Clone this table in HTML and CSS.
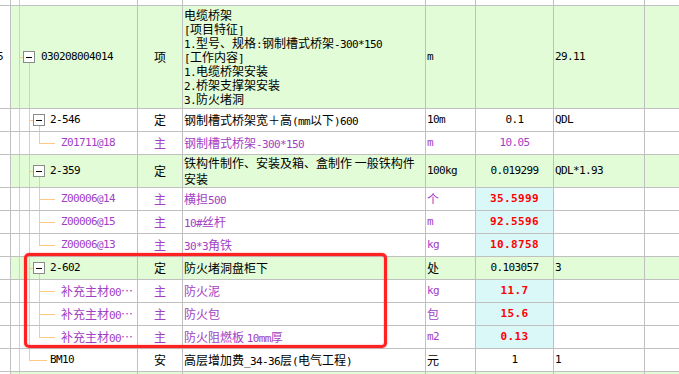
FILE: index.html
```html
<!DOCTYPE html>
<html lang="zh-CN">
<head>
<meta charset="utf-8">
<title>清单</title>
<link rel="stylesheet" href="styles.css">
</head>
<body>
<div class="sheet">
  <div class="grid">
    <div class="row">
      <div class="c n"></div><div class="c code t0"></div><div class="c"></div><div class="c"></div><div class="c"></div><div class="c"></div><div class="c"></div><div class="c"></div>
    </div>
    <div class="row g">
      <div class="c n a">5</div>
      <div class="c code a t-l1 l1"><span class="bx bx1"></span>030208004014</div>
      <div class="c ctr">项</div>
      <div class="c nm"><div class="ml">电缆桥架<br><span class="a">[</span>项目特征<span class="a">]</span><br><span class="a">1.</span>型号、规格<span class="a">:</span>钢制槽式桥架<span class="a">-300*150</span><br><span class="a">[</span>工作内容<span class="a">]</span><br><span class="a">1.</span>电缆桥架安装<br><span class="a">2.</span>桥架支撑架安装<br><span class="a">3.</span>防火堵洞</div></div>
      <div class="c un a">m</div>
      <div class="c ctr a"></div>
      <div class="c ex a">29.11</div>
      <div class="c"></div>
    </div>
    <div class="row">
      <div class="c n"></div>
      <div class="c code a t-l2 l2"><span class="bx"></span>2-546</div>
      <div class="c ctr">定</div>
      <div class="c nm"><span>钢制槽式桥架宽＋高<span class="a">(mm</span>以下<span class="a">)600</span></span></div>
      <div class="c un a">10m</div>
      <div class="c ctr a">0.1</div>
      <div class="c ex a">QDL</div>
      <div class="c"></div>
    </div>
    <div class="row m">
      <div class="c n"></div>
      <div class="c code a t-cl lc">Z01711@18</div>
      <div class="c ctr">主</div>
      <div class="c nm"><span>钢制槽式桥架<span class="a">-300*150</span></span></div>
      <div class="c un a">m</div>
      <div class="c ctr a">10.05</div>
      <div class="c ex a"></div>
      <div class="c"></div>
    </div>
    <div class="row g">
      <div class="c n"></div>
      <div class="c code a t-l2 l2"><span class="bx"></span>2-359</div>
      <div class="c ctr">定</div>
      <div class="c nm"><div class="ml two">铁构件制作、安装及箱、盒制作 一般铁构件<br>安装</div></div>
      <div class="c un a">100kg</div>
      <div class="c ctr a">0.019299</div>
      <div class="c ex a">QDL*1.93</div>
      <div class="c"></div>
    </div>
    <div class="row m">
      <div class="c n"></div>
      <div class="c code a t-c lc">Z00006@14</div>
      <div class="c ctr">主</div>
      <div class="c nm"><span>横担<span class="a">500</span></span></div>
      <div class="c un">个</div>
      <div class="c ctr a cy r">35.5999</div>
      <div class="c ex a"></div>
      <div class="c"></div>
    </div>
    <div class="row m">
      <div class="c n"></div>
      <div class="c code a t-c lc">Z00006@15</div>
      <div class="c ctr">主</div>
      <div class="c nm"><span><span class="a">10#</span>丝杆</span></div>
      <div class="c un a">m</div>
      <div class="c ctr a cy r">92.5596</div>
      <div class="c ex a"></div>
      <div class="c"></div>
    </div>
    <div class="row m">
      <div class="c n"></div>
      <div class="c code a t-cl lc">Z00006@13</div>
      <div class="c ctr">主</div>
      <div class="c nm"><span><span class="a">30*3</span>角铁</span></div>
      <div class="c un a">kg</div>
      <div class="c ctr a cy r">10.8758</div>
      <div class="c ex a"></div>
      <div class="c"></div>
    </div>
    <div class="row g">
      <div class="c n"></div>
      <div class="c code a t-l2 l2"><span class="bx"></span>2-602</div>
      <div class="c ctr">定</div>
      <div class="c nm">防火堵洞盘柜下</div>
      <div class="c un">处</div>
      <div class="c ctr a">0.103057</div>
      <div class="c ex a">3</div>
      <div class="c"></div>
    </div>
    <div class="row m">
      <div class="c n"></div>
      <div class="c code t-c lc"><span>补充主材<span class="a">00</span>⋯</span></div>
      <div class="c ctr">主</div>
      <div class="c nm">防火泥</div>
      <div class="c un a">kg</div>
      <div class="c ctr a cy r">11.7</div>
      <div class="c ex a"></div>
      <div class="c"></div>
    </div>
    <div class="row m">
      <div class="c n"></div>
      <div class="c code t-c lc"><span>补充主材<span class="a">00</span>⋯</span></div>
      <div class="c ctr">主</div>
      <div class="c nm">防火包</div>
      <div class="c un">包</div>
      <div class="c ctr a cy r">15.6</div>
      <div class="c ex a"></div>
      <div class="c"></div>
    </div>
    <div class="row m">
      <div class="c n"></div>
      <div class="c code t-cl lc"><span>补充主材<span class="a">00</span>⋯</span></div>
      <div class="c ctr">主</div>
      <div class="c nm"><span>防火阻燃板 <span class="a">10mm</span>厚</span></div>
      <div class="c un a">m2</div>
      <div class="c ctr a cy r">0.13</div>
      <div class="c ex a"></div>
      <div class="c"></div>
    </div>
    <div class="row">
      <div class="c n"></div>
      <div class="c code a t-e le">BM10</div>
      <div class="c ctr">安</div>
      <div class="c nm"><span>高层增加费<span class="a">_34-36</span>层<span class="a">(</span>电气工程<span class="a">)</span></span></div>
      <div class="c un">元</div>
      <div class="c ctr a">1</div>
      <div class="c ex a">1</div>
      <div class="c"></div>
    </div>
    <div class="row g">
      <div class="c n"></div><div class="c code t0"></div><div class="c"></div><div class="c"></div><div class="c"></div><div class="c"></div><div class="c"></div><div class="c"></div>
    </div>
  </div>
  <div class="hl"></div>
</div>
</body>
</html>
```
FILE: styles.css
```css
html, body {
  margin: 0;
  padding: 0;
  overflow: hidden;
  background: #fff;
}

body {
  font-family: "Noto Sans CJK SC", "Noto Sans", sans-serif;
  font-size: 12px;
  color: #000;
}

.sheet {
  position: relative;
  width: 679px;
  height: 374px;
  overflow: hidden;
  --line: linear-gradient(#fcc884, #fcc884);
}

.grid {
  display: grid;
  grid-template-columns: 10px 126px 44px 242px 49px 77px 90px 34px;
  grid-template-rows: 5px 102px 22px 22px 32px repeat(8, 22px) 22px;
  gap: 1px;
  background: #c0c0c0;
}

.row { display: contents; }

.c {
  background-color: #fff;
  display: flex;
  align-items: center;
  overflow: hidden;
  white-space: nowrap;
  line-height: 14px;
  min-width: 0;
}

.row.g > .c { background-color: #e2fcd7; }
.row > .c.n { background-color: #fff; }
.row.m > .c { color: #a140c4; }
.row > .c.cy { background-color: #daf8f8; }

.a {
  font-family: "DejaVu Sans Mono", "Liberation Mono", monospace;
  font-size: 11px;
  letter-spacing: -0.62px;
  line-height: 10px;
}

.r {
  color: #ff0000 !important;
  font-weight: bold;
  letter-spacing: 0.38px;
}

.n { text-indent: -3px; }

.ctr { justify-content: center; }
.nm { padding-left: 1px; }
.un { padding-left: 1px; }
.ex { padding-left: 1px; }

.ml { white-space: nowrap; line-height: 14px; }
.ml.two { line-height: 16px; }

/* tree guide lines */
.code { background-repeat: no-repeat; }

.t0 {
  background-image: var(--line);
  background-position: 8px 0;
  background-size: 1px 100%;
}
.t-l1 {
  background-image: var(--line), var(--line), var(--line);
  background-position: 8px 0, 8px 50%, 18px 100%;
  background-size: 1px 100%, 10px 1px, 1px 50%;
}
.t-l2 {
  background-image: var(--line), var(--line), var(--line), var(--line);
  background-position: 8px 0, 18px 0, 18px 50%, 28px 100%;
  background-size: 1px 100%, 1px 100%, 10px 1px, 1px 50%;
}
.t-c {
  background-image: var(--line), var(--line), var(--line), var(--line);
  background-position: 8px 0, 18px 0, 28px 0, 28px 50%;
  background-size: 1px 100%, 1px 100%, 1px 100%, 16px 1px;
}
.t-cl {
  background-image: var(--line), var(--line), var(--line), var(--line);
  background-position: 8px 0, 18px 0, 28px 0, 28px 50%;
  background-size: 1px 100%, 1px 100%, 1px 50%, 16px 1px;
}
.t-e {
  background-image: var(--line), var(--line), var(--line);
  background-position: 8px 0, 18px 0, 18px 50%;
  background-size: 1px 100%, 1px 50%, 18px 1px;
}

.l1 { padding-left: 12px; }
.l2 { padding-left: 22px; }
.lc { padding-left: 50px; }
.le { padding-left: 39px; }

.bx {
  flex: none;
  width: 12px;
  height: 12px;
  box-sizing: border-box;
  border: 1px solid #8a8a8a;
  background: linear-gradient(#000, #000) center / 6px 1px no-repeat, #fff;
  margin-right: 5px;
}
.bx1 { margin-right: 6px; }

/* annotation highlight drawn over the rows */
.hl {
  position: absolute;
  left: 24px;
  top: 253px;
  width: 363px;
  height: 95px;
  box-sizing: border-box;
  border: 3px solid #ff2222;
  border-radius: 5px;
  box-shadow: 0 0 1.5px rgba(255, 0, 0, 0.6), inset 0 0 1.5px rgba(255, 0, 0, 0.6);
}
```
